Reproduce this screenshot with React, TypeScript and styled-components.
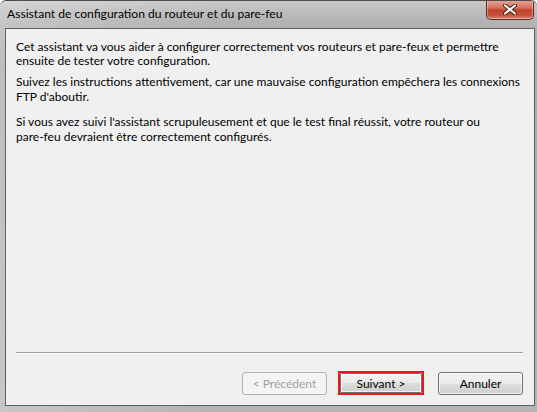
import styled, { createGlobalStyle } from "styled-components";

const GlobalStyle = createGlobalStyle`
  html, body {
    margin: 0;
    padding: 0;
    background: #ffffff;
  }
  body {
    font-family: "Lato", "Noto Sans", sans-serif;
  }
`;

const Window = styled.div`
  box-sizing: border-box;
  width: 537px;
  height: 412px;
  display: flex;
  flex-direction: column;
  padding: 0 2px 6px 5px;
  border-top: 1px solid #4d4d4d;
  border-radius: 6px 6px 0 0;
  background:
    linear-gradient(to right, rgba(255, 255, 255, 0.25), rgba(255, 255, 255, 0) 40%),
    linear-gradient(to bottom, #c9c9c9 0, #b3b3b3 20px, #a9a9a9 60px, #b4b4b4 100%);
  overflow: hidden;
`;

const TitleBar = styled.div`
  height: 27px;
  display: flex;
  align-items: flex-start;
  padding-left: 2px;
`;

const Title = styled.span`
  flex: 1;
  padding-top: 5px;
  font-size: 12.1px;
  line-height: 15px;
  color: #000000;
`;

const CloseButton = styled.div`
  width: 46px;
  height: 19px;
  margin-top: -1px;
  margin-right: 1px;
  display: flex;
  align-items: center;
  justify-content: center;
  border: 1px solid #5a2d2a;
  border-top: none;
  border-radius: 0 0 5px 5px;
  background: linear-gradient(
    to bottom,
    #e9a99a 0,
    #d6715e 40%,
    #c2422b 55%,
    #c7513b 80%,
    #e0836b 100%
  );
  box-shadow: inset 0 0 0 1px rgba(255, 255, 255, 0.35);
`;

const Client = styled.div`
  flex: 1;
  display: flex;
  flex-direction: column;
  background: #f0f0f0;
  border: 1px solid #5f5f5f;
`;

const Body = styled.div`
  flex: 1;
  padding: 10.5px 10px 0 10px;
  font-size: 12px;
  line-height: 14.4px;
  color: #000000;
`;

const Paragraph = styled.p<{ $gap: number }>`
  margin: 0 0 ${(p) => p.$gap}px 0;
`;

const Separator = styled.div`
  margin: 0 11px 0 10px;
  border-top: 1px solid #a0a0a0;
  border-bottom: 1px solid #ffffff;
`;

const ButtonRow = styled.div`
  display: flex;
  justify-content: flex-end;
  align-items: center;
  padding: 17px 11px 10px 0;
`;

const Highlight = styled.span<{ $gap?: number }>`
  display: flex;
  margin-left: ${(p) => p.$gap ?? 0}px;
  border: 2px solid #ec1520;
`;

const Button = styled.button<{ $gap?: number; $inset?: boolean }>`
  box-sizing: border-box;
  width: ${(p) => (p.$inset ? 82 : 85)}px;
  height: ${(p) => (p.$inset ? 20 : 23)}px;
  margin-left: ${(p) => p.$gap ?? 0}px;
  padding: 0;
  font-family: "Lato", "Noto Sans", sans-serif;
  font-size: 12px;
  color: #000000;
  border: 1px solid #707070;
  border-radius: ${(p) => (p.$inset ? 1 : 3)}px;
  background: linear-gradient(
    to bottom,
    #f2f2f2 0,
    #ebebeb 50%,
    #dddddd 51%,
    #cfcfcf 100%
  );
  box-shadow: inset 0 0 0 1px rgba(255, 255, 255, 0.7);

  &:disabled {
    color: #a0a0a0;
    border-color: #adb2b5;
    background: #f4f4f4;
    box-shadow: none;
  }
`;

const CloseGlyph = () => (
  <svg width="14" height="11" viewBox="0 0 14 11">
    <path
      d="M2 1.5 L12 9.5 M12 1.5 L2 9.5"
      stroke="#3a1d1a"
      strokeWidth="4"
      strokeLinecap="round"
    />
    <path
      d="M2 1.5 L12 9.5 M12 1.5 L2 9.5"
      stroke="#ffffff"
      strokeWidth="2.2"
      strokeLinecap="round"
    />
  </svg>
);

const App = () => {
  return (
    <>
      <GlobalStyle />
      <Window>
        <TitleBar>
          <Title>Assistant de configuration du routeur et du pare-feu</Title>
          <CloseButton>
            <CloseGlyph />
          </CloseButton>
        </TitleBar>
        <Client>
          <Body>
            <Paragraph $gap={7}>
              Cet assistant va vous aider à configurer correctement vos routeurs et pare-feux et permettre
              <br />
              ensuite de tester votre configuration.
            </Paragraph>
            <Paragraph $gap={11}>
              Suivez les instructions attentivement, car une mauvaise configuration empêchera les connexions
              <br />
              FTP d'aboutir.
            </Paragraph>
            <Paragraph $gap={0}>
              Si vous avez suivi l'assistant scrupuleusement et que le test final réussit, votre routeur ou
              <br />
              pare-feu devraient être correctement configurés.
            </Paragraph>
          </Body>
          <Separator />
          <ButtonRow>
            <Button disabled>&lt; Précédent</Button>
            <Highlight $gap={11}>
              <Button $inset>Suivant &gt;</Button>
            </Highlight>
            <Button $gap={14}>Annuler</Button>
          </ButtonRow>
        </Client>
      </Window>
    </>
  );
};

export default App;
